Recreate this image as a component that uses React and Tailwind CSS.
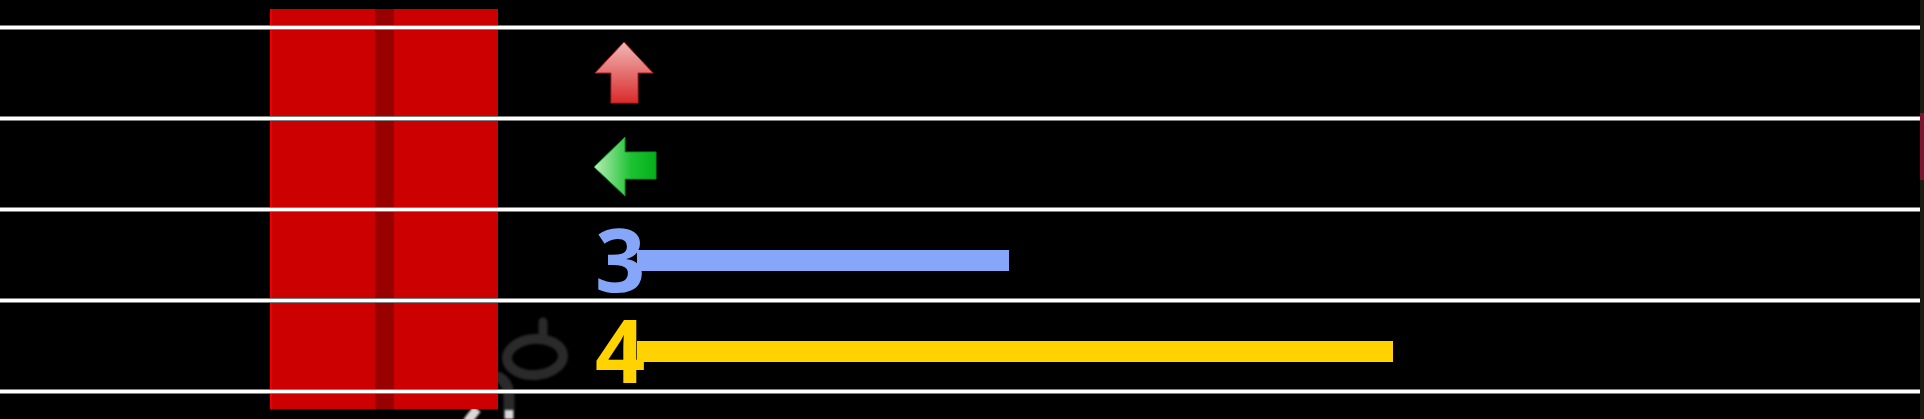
const lanes = [
  { key: 'up' },
  { key: 'left' },
  { key: '3', color: 'text-[#86a6f9]', bar: 'bg-[#86a6f9] w-[372px]' },
  { key: '4', color: 'text-[#ffd200]', bar: 'bg-[#ffd200] w-[756px]' },
];

function UpArrow() {
  return (
    <svg width="62" height="64" viewBox="0 0 62 64" className="ml-[593px] mt-[13px] block blur-[0.7px]">
      <defs>
        <linearGradient id="ua" x1="0" y1="0" x2="0" y2="1">
          <stop offset="0" stopColor="#f2b8b8" />
          <stop offset="1" stopColor="#d92a2a" />
        </linearGradient>
      </defs>
      <path d="M31 0 L60 31 L45 31 L45 61 L18 61 L18 31 L2 31 Z" fill="url(#ua)" stroke="#b02020" strokeWidth="1" />
    </svg>
  );
}

function LeftArrow() {
  return (
    <svg width="66" height="62" viewBox="0 0 66 62" className="ml-[592px] mt-[16px] block blur-[0.7px]">
      <defs>
        <linearGradient id="la" x1="0" y1="0" x2="1" y2="0">
          <stop offset="0" stopColor="#b9eeb9" />
          <stop offset="0.6" stopColor="#1cc232" />
          <stop offset="1" stopColor="#04b01a" />
        </linearGradient>
      </defs>
      <path d="M2 31 L33 1 L33 16 L64 16 L64 43 L33 43 L33 60 Z" fill="url(#la)" stroke="#109020" strokeWidth="1" />
    </svg>
  );
}

function Line() {
  return <div className="relative z-10 h-[3px] bg-white shadow-[0_1px_0_#808080,0_-1px_0_#808080]" />;
}

export default function App() {
  return (
    <div className="relative flex h-[419px] w-full overflow-hidden bg-black">
      <div className="relative z-10 w-[1920px] pt-[26px]">
        {lanes.map((l) => (
          <div key={l.key}>
            <Line />
            <div className="flex h-[88px] items-start">
              {l.key === 'up' && <UpArrow />}
              {l.key === 'left' && <LeftArrow />}
              {l.bar && (
                <div className="relative ml-[593px] h-[88px] grow">
                  <span className={`absolute left-[2px] top-[-3px] font-['Noto_Sans'] text-[88px] font-bold leading-[100px] blur-[0.6px] ${l.color}`}>{l.key}</span>
                  <div className={`absolute left-[44px] top-[39px] h-[21px] ${l.bar}`} />
                </div>
              )}
            </div>
          </div>
        ))}
        <Line />
      </div>
      <div className="flex w-[4px] flex-col bg-[#1c1c12]">
        <div className="mt-[113px] h-[67px] bg-[#7a1530]" />
      </div>
      <svg width="90" height="109" viewBox="0 0 90 109" className="absolute left-[480px] top-[310px] overflow-visible blur-[1px]">
        <ellipse cx="55" cy="47" rx="28" ry="18" fill="none" stroke="#2a2a2a" strokeWidth="10" transform="rotate(-4 55 47)" />
        <path d="M63 28 V12" stroke="#2a2a2a" strokeWidth="9" strokeLinecap="round" />
        <path d="M15 66 C24 68 29 76 29 90 L29 100" fill="none" stroke="#2a2a2a" strokeWidth="11" />
        <path d="M29 100 V109" fill="none" stroke="#d8d8d8" strokeWidth="9" />
        <path d="M-13 112 L-3 99" fill="none" stroke="#d8d8d8" strokeWidth="9" />
      </svg>
      <div className="absolute left-[270px] top-[9px] flex h-[400px] w-[228px] border-l-2 border-[#ee0000] bg-[#cc0000]">
        <div className="ml-[103px] h-full w-[19px] bg-[#990000]" />
      </div>
    </div>
  );
}
